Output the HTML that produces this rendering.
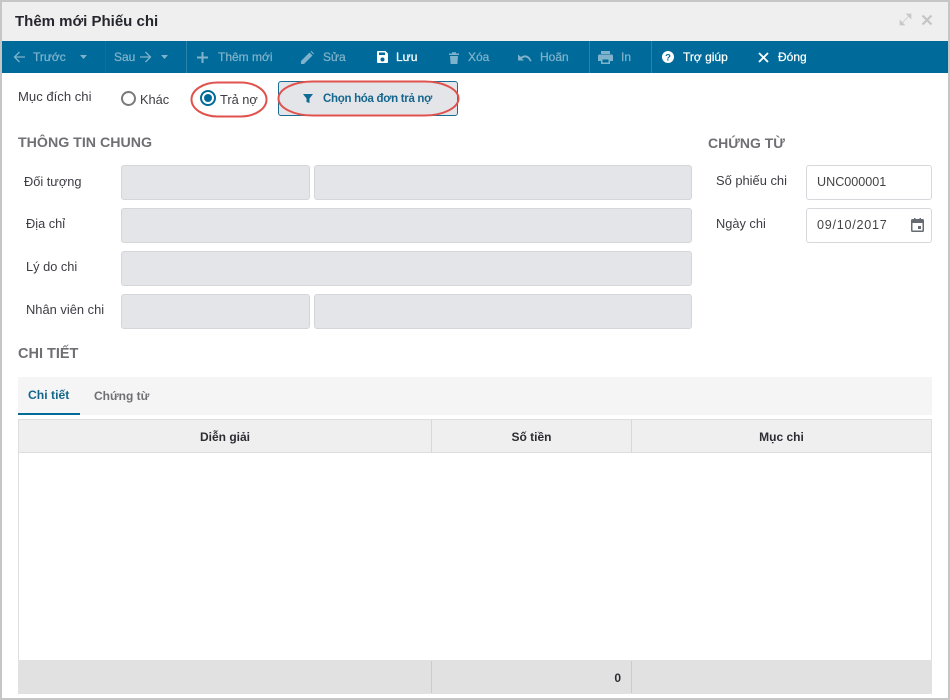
<!DOCTYPE html>
<html lang="vi">
<head>
<meta charset="utf-8">
<title>Thêm mới Phiếu chi</title>
<style>
*{box-sizing:border-box}
html,body{margin:0;padding:0;width:950px;height:700px;overflow:hidden;background:#fff}
body{position:relative;font-family:"Liberation Sans",Arial,sans-serif;font-size:13px;color:#333}
.a,.t{position:absolute}
.t{white-space:nowrap;line-height:16px}
.tb{color:#7fb2cb;font-size:12px;top:49px;-webkit-text-stroke:.25px}
.w{color:#fff}
.lb{color:#3c3c44;font-size:12.8px}
.h{color:#6f6f74;font-weight:bold;font-size:14.2px}
.f{position:absolute;background:#e4e5e9;border:1px solid #d5d6da;border-radius:3px;height:35px}
.i{position:absolute;background:#fff;border:1px solid #d8d8dc;border-radius:3px;height:35px;left:806px;width:126px;color:#444;font-size:12.6px;line-height:33px;padding-left:10px}
.sep{position:absolute;top:41px;height:32px;width:1px;background:#2a83ab}
svg{position:absolute;overflow:visible}
</style>
</head>
<body>
<div class="a" style="left:0;top:0;width:950px;height:700px;border:2px solid #c6c6c6"></div>
<div class="a" style="left:2px;top:2px;width:946px;height:39px;background:#efefef"></div>
<div class="t" style="left:15px;top:14px;font-size:15px;font-weight:bold;color:#26262e">Thêm mới Phiếu chi</div>

<svg style="left:900px;top:14px" width="11" height="11" viewBox="0 0 11 11"><path d="M0 11V6.500L4.500 11zM11 0v4.500L6.500 0zM2 9l7-7" fill="#c8c8c8" stroke="#c8c8c8" stroke-width=".8"/></svg>
<svg style="left:922px;top:15px" width="10" height="10" viewBox="0 0 10 10"><path d="M.5.5l9 9M9.500.5l-9 9" stroke="#c4c4c4" stroke-width="2.200" fill="none"/></svg>

<div class="a" style="left:2px;top:41px;width:946px;height:32px;background:#006b9a"></div>
<div class="sep" style="left:186px"></div>
<div class="sep" style="left:589px"></div>
<div class="sep" style="left:651px"></div>
<div class="sep" style="left:105px;background:#0d7199"></div>

<svg style="left:13px;top:51px" width="13" height="12" viewBox="0 0 13 12"><path d="M12 6H2M6.500 1L1.500 6l5 5" fill="none" stroke="#7fb2cb" stroke-width="1.300"/></svg>
<div class="t tb" style="left:33px">Trước</div>
<svg style="left:79px;top:55px" width="9" height="5" viewBox="0 0 9 5"><path d="M1 0h7L4.500 4z" fill="#7fb2cb"/></svg>
<div class="t tb" style="left:114px">Sau</div>
<svg style="left:139px;top:51px" width="13" height="12" viewBox="0 0 13 12"><path d="M1 6h10M6.500 1l5 5-5 5" fill="none" stroke="#7fb2cb" stroke-width="1.300"/></svg>
<svg style="left:160px;top:55px" width="9" height="5" viewBox="0 0 9 5"><path d="M1 0h7L4.500 4z" fill="#7fb2cb"/></svg>

<svg style="left:197px;top:52px" width="11" height="11" viewBox="0 0 11 11"><path d="M5.500 0v11M0 5.500h11" stroke="#7fb2cb" stroke-width="2"/></svg>
<div class="t tb" style="left:218px">Thêm mới</div>
<svg style="left:301px;top:51px" width="13" height="13" viewBox="0 0 13 13"><path d="M0 13V10L8.500 1.500l3 3L3 13zM9.500.5l1-.5 2.500 2.500-.5 1z" fill="#7fb2cb"/></svg>
<div class="t tb" style="left:323px">Sửa</div>
<svg style="left:377px;top:51px" width="11" height="12" viewBox="0 0 11 12"><path fill-rule="evenodd" d="M1 0h7.500L11 2.500V11a1 1 0 0 1-1 1H1a1 1 0 0 1-1-1V1a1 1 0 0 1 1-1zM2 1.500V4h6V1.500zM5.500 6.500a2 2 0 1 0 0 4 2 2 0 0 0 0-4z" fill="#fff"/></svg>
<div class="t tb w" style="left:396px">Lưu</div>
<svg style="left:449px;top:52px" width="10" height="12" viewBox="0 0 10 12"><path d="M0 1.500h10V3H0zM3 .3h4v1.500H3zM1 4h8l-.6 8H1.600z" fill="#7fb2cb"/></svg>
<div class="t tb" style="left:468px">Xóa</div>
<svg style="left:518px;top:53px" width="14" height="9" viewBox="0 0 14 9"><path d="M0 1v6h6L4 5c2.500-2 6-1.500 8 3l1.500-.5C11.500 1.500 6.500.5 3 3.500z" fill="#7fb2cb" transform="translate(0 .5)"/></svg>
<div class="t tb" style="left:540px">Hoãn</div>
<svg style="left:598px;top:51px" width="15" height="13" viewBox="0 0 15 13"><path fill-rule="evenodd" d="M3 0h9v3H3zM1.500 3.500h12A1.500 1.500 0 0 1 15 5v5h-3v3H3v-3H0V5a1.500 1.500 0 0 1 1.500-1.500zM4.500 8.500v3h6v-3z" fill="#7fb2cb"/></svg>
<div class="t tb" style="left:621px">In</div>
<svg style="left:662px;top:51px" width="12" height="12" viewBox="0 0 12 12"><circle cx="6" cy="6" r="6" fill="#fff"/><text x="6" y="9.500" font-size="9.500" font-weight="bold" text-anchor="middle" fill="#006b9a" font-family="Liberation Sans">?</text></svg>
<div class="t tb w" style="left:683px">Trợ giúp</div>
<svg style="left:758px;top:52px" width="11" height="11" viewBox="0 0 11 11"><path d="M1 1l9 9M10 1l-9 9" stroke="#fff" stroke-width="1.800" fill="none"/></svg>
<div class="t tb w" style="left:778px">Đóng</div>

<div class="t lb" style="left:18px;top:89px;font-size:13.100px">Mục đích chi</div>
<div class="a" style="left:121px;top:91px;width:15px;height:15px;border:2px solid #7a7a7a;border-radius:50%"></div>
<div class="t lb" style="left:140px;top:92px">Khác</div>
<div class="a" style="left:200px;top:90px;width:16px;height:16px;border:2px solid #006b9a;border-radius:50%"></div>
<div class="a" style="left:204px;top:94px;width:8px;height:8px;background:#006b9a;border-radius:50%"></div>
<div class="t lb" style="left:220px;top:92px">Trả nợ</div>
<div class="a" style="left:278px;top:81px;width:180px;height:35px;background:#e4e5e9;border:1px solid #1a6c93;border-radius:3px"></div>
<svg style="left:303px;top:94px" width="10" height="10" viewBox="0 0 10 10"><path d="M0 0h10L6.500 4.500V9l-3-1V4.500z" fill="#0f6a94"/></svg>
<div class="t" style="left:323px;top:91px;font-size:11.500px;letter-spacing:-.3px;font-weight:bold;color:#15668d">Chọn hóa đơn trả nợ</div>
<svg style="left:0;top:0" width="950" height="130" viewBox="0 0 950 130">
<rect x="191.500" y="82.500" width="75" height="34" rx="26" ry="17" fill="none" stroke="#e0524d" stroke-width="2"/>
<rect x="278.500" y="81.500" width="180" height="34" rx="34" ry="17" fill="none" stroke="#e0524d" stroke-width="2"/>
</svg>

<div class="t h" style="left:18px;top:135px">THÔNG TIN CHUNG</div>
<div class="t h" style="left:708px;top:135px;font-size:14px">CHỨNG TỪ</div>

<div class="t lb" style="left:24px;top:174px">Đối tượng</div>
<div class="t lb" style="left:26px;top:216px">Địa chỉ</div>
<div class="t lb" style="left:26px;top:259px">Lý do chi</div>
<div class="t lb" style="left:26px;top:302px;font-size:12.900px">Nhân viên chi</div>
<div class="f" style="left:121px;top:165px;width:189px"></div>
<div class="f" style="left:314px;top:165px;width:378px"></div>
<div class="f" style="left:121px;top:208px;width:571px"></div>
<div class="f" style="left:121px;top:251px;width:571px"></div>
<div class="f" style="left:121px;top:294px;width:189px"></div>
<div class="f" style="left:314px;top:294px;width:378px"></div>

<div class="t lb" style="left:716px;top:173px;font-size:12.900px">Số phiếu chi</div>
<div class="t lb" style="left:716px;top:216px">Ngày chi</div>
<div class="i" style="top:165px">UNC000001</div>
<div class="i" style="top:208px;letter-spacing:.75px">09/10/2017</div>
<svg style="left:911px;top:218px" width="13" height="14" viewBox="0 0 13 14"><path fill-rule="evenodd" d="M1.500 1H3V0h1.500v1h4V0H10v1h1.500A1.500 1.500 0 0 1 13 2.500v10a1.500 1.500 0 0 1-1.500 1.500h-10A1.500 1.500 0 0 1 0 12.500v-10A1.500 1.500 0 0 1 1.500 1zM1.500 5v7.500h10V5zM7 8h3v3H7z" fill="#666b72"/></svg>

<div class="t h" style="left:18px;top:346px;font-size:14.500px">CHI TIẾT</div>
<div class="a" style="left:18px;top:377px;width:914px;height:38px;background:#f5f5f5"></div>
<div class="a" style="left:18px;top:413px;width:62px;height:2px;background:#006b9a"></div>
<div class="t" style="left:28px;top:387px;font-size:12.200px;font-weight:bold;color:#15668d">Chi tiết</div>
<div class="t" style="left:94px;top:388px;font-size:12px;font-weight:bold;color:#6f6f74">Chứng từ</div>

<div class="a" style="left:18px;top:419px;width:914px;height:275px;border:1px solid #dedede;border-bottom:0;background:#fff"></div>
<div class="a" style="left:19px;top:420px;width:912px;height:33px;background:#efefef;border-bottom:1px solid #dedede"></div>
<div class="a" style="left:431px;top:420px;width:1px;height:33px;background:#d8d8d8"></div>
<div class="a" style="left:631px;top:420px;width:1px;height:33px;background:#d8d8d8"></div>
<div class="t" style="left:19px;width:412px;text-align:center;top:429px;font-size:12px;font-weight:bold;color:#2c2c34">Diễn giải</div>
<div class="t" style="left:432px;width:199px;text-align:center;top:429px;font-size:12px;font-weight:bold;color:#2c2c34">Số tiền</div>
<div class="t" style="left:632px;width:299px;text-align:center;top:429px;font-size:12px;font-weight:bold;color:#2c2c34">Mục chi</div>

<div class="a" style="left:18px;top:660px;width:914px;height:34px;background:#e1e1e1"></div>
<div class="a" style="left:431px;top:661px;width:1px;height:32px;background:#cbcbcb"></div>
<div class="a" style="left:631px;top:661px;width:1px;height:32px;background:#cbcbcb"></div>
<div class="t" style="left:560px;width:61px;text-align:right;top:670px;font-size:12px;font-weight:bold;color:#2c2c34">0</div>
</body>
</html>
